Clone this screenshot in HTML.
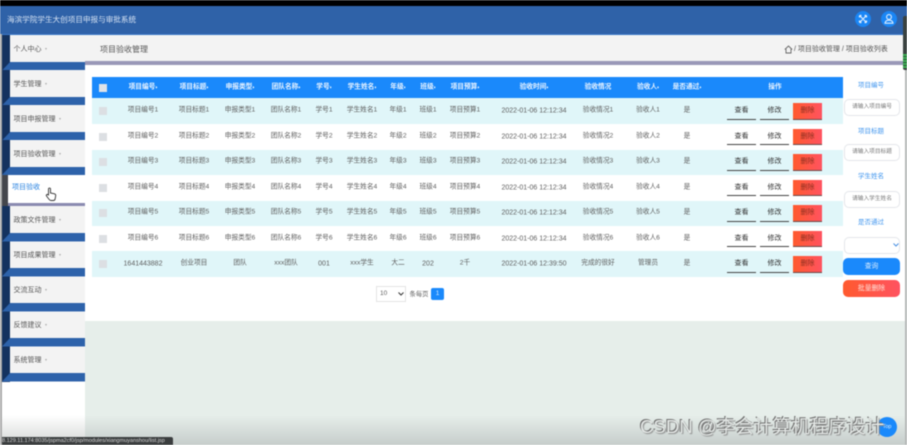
<!DOCTYPE html>
<html lang="zh"><head><meta charset="utf-8"><title>项目验收管理</title>
<style>
*{box-sizing:border-box;margin:0;padding:0}
html,body{width:907px;height:445px;overflow:hidden;background:#fff}
body{position:relative;font-family:"Liberation Sans","Noto Sans CJK SC",sans-serif;font-size:6.7px;color:#5f5f5f}
#p{position:absolute;left:0;top:0;width:907px;height:445px;overflow:hidden;filter:blur(.45px)}
.a{position:absolute}
.t{position:absolute;white-space:nowrap;transform:translate(-50%,-50%);line-height:1}
.item{position:absolute;left:10px;width:75px;background:#f3f3f3;color:#555;font-size:7px}
.item span{position:absolute;left:3.5px;top:50%;transform:translateY(-50%);white-space:nowrap}
.item span:after{content:"";display:inline-block;margin-left:3.5px;border:1.5px solid transparent;border-top:2px solid #aaa;vertical-align:0}
.stripe{position:absolute;left:2px;width:8px;background:#14325f}
.band{position:absolute;left:2px;width:83px;height:8.5px;background:#2d62aa;clip-path:polygon(8px 0,100% 0,100% 100%,0 100%)}
.b{position:absolute;width:29px;height:16.5px;line-height:16px;text-align:center;font-size:7px;color:#333;border-bottom:1.5px solid #444;background:transparent}
.del{background:linear-gradient(90deg,#ff5a2e,#ff5360);color:#8a2f20;border-bottom:1.5px solid #6a4a4a}
.lab{position:absolute;left:871px;transform:translate(-50%,-50%);color:#3f95ee;font-size:6.5px;white-space:nowrap;line-height:1}
.inp{position:absolute;left:844px;width:56px;height:17px;border:1px solid #e4e6ea;border-radius:5px;background:#fff;text-align:center;line-height:15px;font-size:5.7px;color:#777}
</style></head><body><div id="p">

<div class="a" style="left:0;top:0;width:907px;height:6px;background:#000"></div>
<div class="a" style="left:0;top:6px;width:907px;height:28.5px;background:#2f62a8;border-bottom:1px solid #3a78c8"></div>
<div class="a" style="left:0;top:34px;width:2px;height:411px;background:#aaa"></div>
<div class="a" style="left:7px;top:15px;color:#d5e2f3;font-size:7.6px;line-height:10px;white-space:nowrap">海滨学院学生大创项目申报与审批系统</div>

<div class="a" style="left:855px;top:11px;width:16px;height:16px;border-radius:50%;background:#1a86f5"></div>
<svg class="a" style="left:855px;top:11px" width="16" height="16" viewBox="0 0 16 16" fill="none" stroke="#dfeefe" stroke-width="1.2"><path d="M5 5l6 6M11 5l-6 6M4.5 4.5h2M4.500 4.500v2M11.500 4.500h-2M11.500 4.500v2M4.500 11.500h2M4.500 11.500v-2M11.500 11.500h-2M11.500 11.500v-2"/></svg>
<div class="a" style="left:881px;top:11px;width:16px;height:16px;border-radius:50%;background:#1a86f5"></div>
<svg class="a" style="left:881px;top:11px" width="16" height="16" viewBox="0 0 16 16" fill="none" stroke="#dfeefe" stroke-width="1.1"><circle cx="8" cy="6" r="2.4"/><path d="M4 12.200c.3-2.200 2-3 4-3s3.700.8 4 3z"/></svg>

<!-- title bar -->
<div class="a" style="left:85px;top:35px;width:822px;height:26px;background:#f3f3f3"></div>
<div class="a" style="left:85px;top:61px;width:822px;height:4px;background:#9a98b8"></div>
<div class="a" style="left:100px;top:45px;font-size:8px;line-height:10px;color:#555;white-space:nowrap">项目验收管理</div>
<svg class="a" style="left:784px;top:45px" width="9" height="9" viewBox="0 0 9 9" fill="none" stroke="#666" stroke-width=".9"><path d="M.8 4.500L4.500 1l3.700 3.500M2 4v4h5V4"/></svg>
<div class="a" style="left:794px;top:45px;font-size:7px;line-height:10px;color:#555;white-space:nowrap">/ 项目验收管理 / 项目验收列表</div>

<!-- content bg -->
<div class="a" style="left:85px;top:65px;width:820px;height:256px;background:#fff"></div>
<div class="a" style="left:85px;top:321px;width:820px;height:124px;background:linear-gradient(#e6eeea 0,#e6eeea 76%,#c6cdcb 100%)"></div>
<div class="a" style="left:2px;top:415px;width:83px;height:30px;background:linear-gradient(#fff,#d5d7d6)"></div>
<div class="a" style="left:905px;top:61px;width:2px;height:384px;background:#b5b8b7"></div>

<!-- sidebar -->
<div class="stripe" style="top:35px;height:35.500px"></div><div class="item" style="top:35px;height:27px"><span>个人中心</span></div><div class="band" style="top:62px"></div>
<div class="stripe" style="top:70px;height:35.500px"></div><div class="item" style="top:70px;height:27px"><span>学生管理</span></div><div class="band" style="top:97px"></div>
<div class="stripe" style="top:105px;height:35.500px"></div><div class="item" style="top:105px;height:27px"><span>项目申报管理</span></div><div class="band" style="top:132px"></div>
<div class="stripe" style="top:140px;height:35.500px"></div><div class="item" style="top:140px;height:27px"><span>项目验收管理</span></div><div class="band" style="top:166.500px"></div>
<div class="a" style="left:2px;top:175px;width:83px;height:31px;background:#fff"></div>
<div class="a" style="left:2px;top:175px;width:6px;height:31px;background:#44464c"></div>
<div class="a" style="left:8px;top:203px;width:77px;height:3px;background:#8a8ab0"></div>
<div class="a" style="left:12px;top:183px;color:#2a83e0;font-size:7px;line-height:10px;white-space:nowrap">项目验收</div>
<svg class="a" style="left:45px;top:187px" width="12" height="15" viewBox="0 0 12 15" fill="#fff" stroke="#333" stroke-width=".9"><path d="M3.500 8V2c0-1.300 2-1.300 2 0v4l4 .8c1 .3 1.300 1 1.200 2l-.6 3.200c-.2 1-.8 1.500-1.800 1.500H6c-.8 0-1.300-.4-1.800-1L1.500 9c-.7-1.200.8-2.200 1.600-1.200z"/></svg>
<div class="stripe" style="top:206px;height:35.500px"></div><div class="item" style="top:206px;height:27px"><span>政策文件管理</span></div><div class="band" style="top:233px"></div>
<div class="stripe" style="top:241.500px;height:35.500px"></div><div class="item" style="top:241.500px;height:27px"><span>项目成果管理</span></div><div class="band" style="top:268px"></div>
<div class="stripe" style="top:277px;height:35px"></div><div class="item" style="top:277px;height:26px"><span>交流互动</span></div><div class="band" style="top:303px"></div>
<div class="stripe" style="top:312px;height:35px"></div><div class="item" style="top:312px;height:26px"><span>反馈建议</span></div><div class="band" style="top:338px"></div>
<div class="stripe" style="top:347px;height:35px"></div><div class="item" style="top:347px;height:26px"><span>系统管理</span></div><div class="band" style="top:373px"></div>

<!-- table header -->
<div class="a" style="left:92px;top:77px;width:751px;height:21px;background:#1a89fb"></div>
<div class="a" style="left:99px;top:84px;width:8px;height:8px;background:#dfe3e8"></div>
<div style="color:#eaf4ff;font-weight:bold;font-size:6.700px">
<span class="t" style="left:143px;top:87.500px">项目编号<small style="font-size:4px">♦</small></span><span class="t" style="left:194px;top:87.500px">项目标题<small style="font-size:4px">♦</small></span><span class="t" style="left:240px;top:87.500px">申报类型<small style="font-size:4px">♦</small></span><span class="t" style="left:286px;top:87.500px">团队名称<small style="font-size:4px">♦</small></span><span class="t" style="left:324px;top:87.500px">学号<small style="font-size:4px">♦</small></span><span class="t" style="left:362px;top:87.500px">学生姓名<small style="font-size:4px">♦</small></span><span class="t" style="left:398px;top:87.500px">年级<small style="font-size:4px">♦</small></span><span class="t" style="left:428px;top:87.500px">班级<small style="font-size:4px">♦</small></span><span class="t" style="left:465px;top:87.500px">项目预算<small style="font-size:4px">♦</small></span><span class="t" style="left:534px;top:87.500px">验收时间<small style="font-size:4px">♦</small></span><span class="t" style="left:598px;top:87.500px">验收情况</span><span class="t" style="left:648px;top:87.500px">验收人<small style="font-size:4px">♦</small></span><span class="t" style="left:687px;top:87.500px">是否通过<small style="font-size:4px">♦</small></span><span class="t" style="left:775px;top:87.500px">操作</span>
</div>

<!-- rows -->
<div class="a" style="left:92px;width:751px;top:98px;height:26px;background:#e0f6f9"></div>
<div class="a" style="left:92px;width:751px;top:149.500px;height:25.500px;background:#e0f6f9"></div>
<div class="a" style="left:92px;width:751px;top:200.700px;height:25.300px;background:#e0f6f9"></div>
<div class="a" style="left:92px;width:751px;top:251px;height:26px;background:#e0f6f9"></div>

<div class="a" style="left:99px;top:107px;width:8px;height:8px;background:#dcdfe3"></div>
<span class="t" style="left:143px;top:111px">项目编号1</span><span class="t" style="left:194px;top:111px">项目标题1</span><span class="t" style="left:240px;top:111px">申报类型1</span><span class="t" style="left:286px;top:111px">团队名称1</span><span class="t" style="left:324px;top:111px">学号1</span><span class="t" style="left:362px;top:111px">学生姓名1</span><span class="t" style="left:398px;top:111px">年级1</span><span class="t" style="left:428px;top:111px">班级1</span><span class="t" style="left:465px;top:111px">项目预算1</span><span class="t" style="left:534px;top:111px;font-size:7px">2022-01-06 12:12:34</span><span class="t" style="left:598px;top:111px">验收情况1</span><span class="t" style="left:648px;top:111px">验收人1</span><span class="t" style="left:687px;top:111px">是</span>
<div class="b" style="left:727px;top:103px">查看</div><div class="b" style="left:760px;top:103px">修改</div><div class="b del" style="left:793px;top:103px">删除</div>

<div class="a" style="left:99px;top:132.500px;width:8px;height:8px;background:#dcdfe3"></div>
<span class="t" style="left:143px;top:136.500px">项目编号2</span><span class="t" style="left:194px;top:136.500px">项目标题2</span><span class="t" style="left:240px;top:136.500px">申报类型2</span><span class="t" style="left:286px;top:136.500px">团队名称2</span><span class="t" style="left:324px;top:136.500px">学号2</span><span class="t" style="left:362px;top:136.500px">学生姓名2</span><span class="t" style="left:398px;top:136.500px">年级2</span><span class="t" style="left:428px;top:136.500px">班级2</span><span class="t" style="left:465px;top:136.500px">项目预算2</span><span class="t" style="left:534px;top:136.500px;font-size:7px">2022-01-06 12:12:34</span><span class="t" style="left:598px;top:136.500px">验收情况2</span><span class="t" style="left:648px;top:136.500px">验收人2</span><span class="t" style="left:687px;top:136.500px">是</span>
<div class="b" style="left:727px;top:128.500px">查看</div><div class="b" style="left:760px;top:128.500px">修改</div><div class="b del" style="left:793px;top:128.500px">删除</div>

<div class="a" style="left:99px;top:158px;width:8px;height:8px;background:#dcdfe3"></div>
<span class="t" style="left:143px;top:162px">项目编号3</span><span class="t" style="left:194px;top:162px">项目标题3</span><span class="t" style="left:240px;top:162px">申报类型3</span><span class="t" style="left:286px;top:162px">团队名称3</span><span class="t" style="left:324px;top:162px">学号3</span><span class="t" style="left:362px;top:162px">学生姓名3</span><span class="t" style="left:398px;top:162px">年级3</span><span class="t" style="left:428px;top:162px">班级3</span><span class="t" style="left:465px;top:162px">项目预算3</span><span class="t" style="left:534px;top:162px;font-size:7px">2022-01-06 12:12:34</span><span class="t" style="left:598px;top:162px">验收情况3</span><span class="t" style="left:648px;top:162px">验收人3</span><span class="t" style="left:687px;top:162px">是</span>
<div class="b" style="left:727px;top:154px">查看</div><div class="b" style="left:760px;top:154px">修改</div><div class="b del" style="left:793px;top:154px">删除</div>

<div class="a" style="left:99px;top:183.500px;width:8px;height:8px;background:#dcdfe3"></div>
<span class="t" style="left:143px;top:187.500px">项目编号4</span><span class="t" style="left:194px;top:187.500px">项目标题4</span><span class="t" style="left:240px;top:187.500px">申报类型4</span><span class="t" style="left:286px;top:187.500px">团队名称4</span><span class="t" style="left:324px;top:187.500px">学号4</span><span class="t" style="left:362px;top:187.500px">学生姓名4</span><span class="t" style="left:398px;top:187.500px">年级4</span><span class="t" style="left:428px;top:187.500px">班级4</span><span class="t" style="left:465px;top:187.500px">项目预算4</span><span class="t" style="left:534px;top:187.500px;font-size:7px">2022-01-06 12:12:34</span><span class="t" style="left:598px;top:187.500px">验收情况4</span><span class="t" style="left:648px;top:187.500px">验收人4</span><span class="t" style="left:687px;top:187.500px">是</span>
<div class="b" style="left:727px;top:179.500px">查看</div><div class="b" style="left:760px;top:179.500px">修改</div><div class="b del" style="left:793px;top:179.500px">删除</div>

<div class="a" style="left:99px;top:209px;width:8px;height:8px;background:#dcdfe3"></div>
<span class="t" style="left:143px;top:213px">项目编号5</span><span class="t" style="left:194px;top:213px">项目标题5</span><span class="t" style="left:240px;top:213px">申报类型5</span><span class="t" style="left:286px;top:213px">团队名称5</span><span class="t" style="left:324px;top:213px">学号5</span><span class="t" style="left:362px;top:213px">学生姓名5</span><span class="t" style="left:398px;top:213px">年级5</span><span class="t" style="left:428px;top:213px">班级5</span><span class="t" style="left:465px;top:213px">项目预算5</span><span class="t" style="left:534px;top:213px;font-size:7px">2022-01-06 12:12:34</span><span class="t" style="left:598px;top:213px">验收情况5</span><span class="t" style="left:648px;top:213px">验收人5</span><span class="t" style="left:687px;top:213px">是</span>
<div class="b" style="left:727px;top:205px">查看</div><div class="b" style="left:760px;top:205px">修改</div><div class="b del" style="left:793px;top:205px">删除</div>

<div class="a" style="left:99px;top:234.500px;width:8px;height:8px;background:#dcdfe3"></div>
<span class="t" style="left:143px;top:238.500px">项目编号6</span><span class="t" style="left:194px;top:238.500px">项目标题6</span><span class="t" style="left:240px;top:238.500px">申报类型6</span><span class="t" style="left:286px;top:238.500px">团队名称6</span><span class="t" style="left:324px;top:238.500px">学号6</span><span class="t" style="left:362px;top:238.500px">学生姓名6</span><span class="t" style="left:398px;top:238.500px">年级6</span><span class="t" style="left:428px;top:238.500px">班级6</span><span class="t" style="left:465px;top:238.500px">项目预算6</span><span class="t" style="left:534px;top:238.500px;font-size:7px">2022-01-06 12:12:34</span><span class="t" style="left:598px;top:238.500px">验收情况6</span><span class="t" style="left:648px;top:238.500px">验收人6</span><span class="t" style="left:687px;top:238.500px">是</span>
<div class="b" style="left:727px;top:230.500px">查看</div><div class="b" style="left:760px;top:230.500px">修改</div><div class="b del" style="left:793px;top:230.500px">删除</div>

<div class="a" style="left:99px;top:260px;width:8px;height:8px;background:#dcdfe3"></div>
<span class="t" style="left:143px;top:264px;font-size:7px">1641443882</span><span class="t" style="left:194px;top:264px">创业项目</span><span class="t" style="left:240px;top:264px">团队</span><span class="t" style="left:286px;top:264px">xxx团队</span><span class="t" style="left:324px;top:264px;font-size:7px">001</span><span class="t" style="left:362px;top:264px">xxx学生</span><span class="t" style="left:398px;top:264px">大二</span><span class="t" style="left:428px;top:264px;font-size:7px">202</span><span class="t" style="left:465px;top:264px">2千</span><span class="t" style="left:534px;top:264px;font-size:7px">2022-01-06 12:39:50</span><span class="t" style="left:598px;top:264px">完成的很好</span><span class="t" style="left:648px;top:264px">管理员</span><span class="t" style="left:687px;top:264px">是</span>
<div class="b" style="left:727px;top:256px">查看</div><div class="b" style="left:760px;top:256px">修改</div><div class="b del" style="left:793px;top:256px">删除</div>

<!-- pagination -->
<div class="a" style="left:376px;top:286px;width:30px;height:16px;border:1px solid #e4e4e4;background:#fff;font-size:6.500px;line-height:14px;padding-left:3px">10</div>
<svg class="a" style="left:398px;top:292px" width="6" height="4" viewBox="0 0 6 4" fill="none" stroke="#333" stroke-width="1"><path d="M.5.500L3 3 5.500.500"/></svg>
<span class="t" style="left:419px;top:295px;font-size:6.300px">条每页</span>
<div class="a" style="left:431px;top:288px;width:13px;height:12px;background:#1a89fb;border-radius:2px;color:#d8ecff;text-align:center;font-size:6.500px;line-height:12px">1</div>

<!-- right panel -->
<span class="lab" style="top:86px">项目编号</span><div class="inp" style="top:99px">请输入项目编号</div>
<span class="lab" style="top:131.500px">项目标题</span><div class="inp" style="top:144px">请输入项目标题</div>
<span class="lab" style="top:177px">学生姓名</span><div class="inp" style="top:190.500px">请输入学生姓名</div>
<span class="lab" style="top:223px">是否通过</span><div class="inp" style="top:236.500px"></div>
<svg class="a" style="left:893px;top:243px" width="6" height="4" viewBox="0 0 6 4" fill="none" stroke="#4a90e2" stroke-width="1"><path d="M.5.500L3 3 5.500.500"/></svg>
<div class="a" style="left:843px;top:258px;width:57px;height:17px;border-radius:5px;background:#1a89fb;color:#d8ecff;text-align:center;line-height:17px;font-size:6.800px">查询</div>
<div class="a" style="left:843px;top:279.500px;width:57px;height:17px;border-radius:5px;background:linear-gradient(90deg,#ff5a2e,#ff5360);color:#ffe0d8;text-align:center;line-height:17px;font-size:6.800px">批量删除</div>

<!-- scrollbar overlay -->
<div class="a" style="left:903px;top:16px;width:4px;height:54px;background:#3a4240;border-radius:2px 0 0 2px"></div>
<div class="a" style="left:903px;top:54px;width:4px;height:14px;background:repeating-linear-gradient(#3fae55 0,#3fae55 2px,#2a5a38 2px,#2a5a38 3px)"></div>

<!-- status bar -->
<div class="a" style="left:2px;top:437px;width:171px;height:8px;background:#3a3d3e;color:#d5d5d5;font-size:5.500px;line-height:9px;white-space:nowrap;overflow:hidden;border-radius:0 2px 0 0">8.129.11.174:8035/jspma2cf0/jsp/modules/xiangmuyanshou/list.jsp</div>

<!-- back to top + watermark -->
<div class="a" style="left:877px;top:417px;width:20px;height:20px;border-radius:50%;background:#1a89fb;color:#d8ecff;font-size:5.500px;line-height:20px;text-align:center">Top</div>
<div class="a" style="left:640px;top:415px;font-size:18.600px;line-height:24px;color:#e4e8e6;white-space:nowrap;text-shadow:-1px -1px 0 #6f6f6f,1px 1px 1px #8a8a8a">CSDN @李会计算机程序设计</div>

</div></body></html>
